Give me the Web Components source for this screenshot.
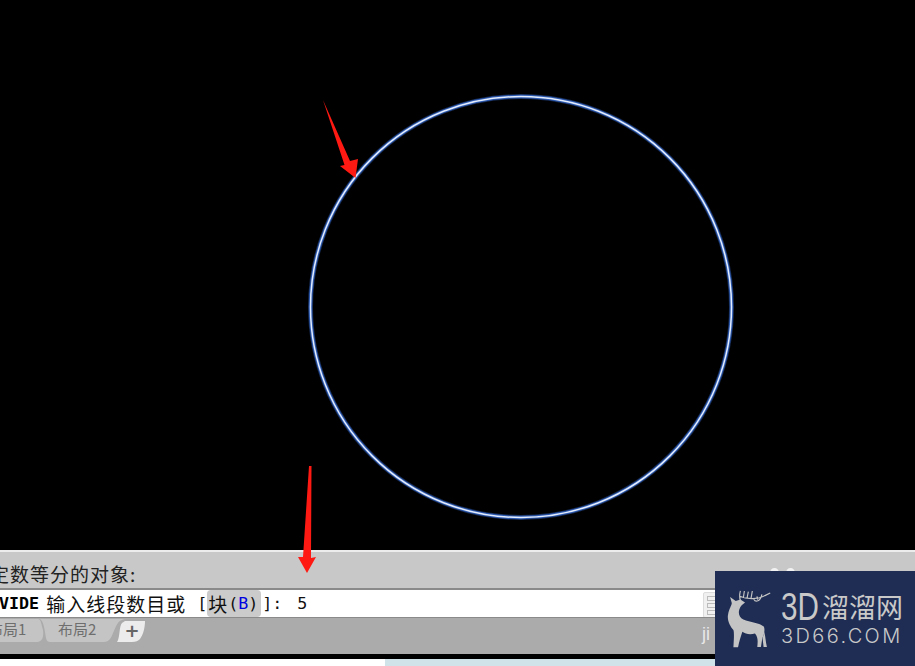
<!DOCTYPE html>
<html>
<head>
<meta charset="utf-8">
<style>
	html, body { margin: 0; height: 100%; background: #000; overflow: hidden; }
	body { display: flex; flex-direction: column; width: 915px; height: 666px; position: relative; }
</style>
</head>
<body>
<cad-viewport></cad-viewport>
<cad-history>定数等分的对象:</cad-history>
<cad-prompt></cad-prompt>
<cad-tabs></cad-tabs>
<page-strip></page-strip>
<red-arrows></red-arrows>
<logo-badge></logo-badge>

<script>
class CadViewport extends HTMLElement {
	constructor() {
		super();
		const shadowRoot = this.attachShadow({ mode: 'open' });
		shadowRoot.innerHTML = `<style>
	:host { display: block; flex: none; height: 550px; background: #000; overflow: hidden; }
	svg { display: block; }
	</style>
	<svg width="915" height="550" viewBox="0 0 915 550">
		<circle cx="521" cy="307" r="210.5" fill="none" stroke="#15294f" stroke-width="5"/>
		<circle cx="521" cy="307" r="210.5" fill="none" stroke="#2f5cb4" stroke-width="3.4"/>
		<circle cx="521" cy="307" r="210.5" fill="none" stroke="#e2ecfd" stroke-width="1.5"/>
	</svg>`;
	}
}

class RedArrows extends HTMLElement {
	constructor() {
		super();
		const shadowRoot = this.attachShadow({ mode: 'open' });
		shadowRoot.innerHTML = `<style>
	:host { position: absolute; left: 0; top: 0; width: 915px; height: 666px; pointer-events: none; }
	svg { display: block; }
	</style>
	<svg width="915" height="666" viewBox="0 0 915 666">
		<path d="M323 100 L350 161 L358 159 L355.5 178 L340 166 L344.500 165 Z" fill="#fe1a12"/>
		<path d="M309 466 L311.500 466 L311 558 L316 557 L307 573 L298 557 L303 557 Z" fill="#fe1a12"/>
	</svg>`;
	}
}

class CadHistory extends HTMLElement {
	constructor() {
		super();
		const shadowRoot = this.attachShadow({ mode: 'open' });
		shadowRoot.innerHTML = `<style>
	:host {
		display: block; flex: none; height: 38px; box-sizing: border-box; position: relative;
		background: #c8c8c8; border-top: 2px solid #ececec;
		font: 19px/43px "Noto Sans CJK SC", "DejaVu Sans Mono", monospace; letter-spacing: 1px; color: #222;
		overflow: hidden; white-space: nowrap;
	}
	.line { display: block; margin-left: -10px; }
	i { position: absolute; top: 16px; width: 9px; height: 10px; border-radius: 50%; background: #f2f2f2; }
	</style>
	<span class="line"><slot></slot></span>
	<i style="left:770px"></i><i style="left:786px"></i>`;
	}
}

class CadPrompt extends HTMLElement {
	constructor() {
		super();
		const shadowRoot = this.attachShadow({ mode: 'open' });
		shadowRoot.innerHTML = `<style>
	:host {
		display: flex; flex: none; align-items: center; height: 29px; box-sizing: border-box;
		background: #fff; border-top: 2px solid #8a8a8a;
		font: 16.67px "DejaVu Sans Mono", "Noto Sans CJK SC", monospace; color: #111;
		white-space: nowrap; overflow: hidden; position: relative;
	}
	b { margin-left: -1px; color: #000; }
	.cn { font: 19px "Noto Sans CJK SC", sans-serif; letter-spacing: 1px; }
	.cmd { margin-left: 7px; }
	.br { margin-left: 11px; }
	.opt {
		display: flex; align-items: center; height: 27px; padding: 0 3px 0 1px; margin-right: 1px;
		background: #cbcbcb; border-radius: 4px;
	}
	.key { color: #0000e0; }
	.val { margin-left: 15px; }
	.tool {
		position: absolute; left: 703px; top: 2px; width: 30px; height: 26px; box-sizing: border-box;
		background: #f0f0f0; border: 1px solid #dcdcdc; border-radius: 2px;
	}
	.tool i { position: absolute; left: 3px; width: 12px; height: 3px; border: 1px solid #bbb; }
	</style>
	<b>VIDE</b><span class="cn cmd">输入线段数目或</span><span class="br">[</span><span class="opt"><span class="cn">块</span><span>(</span><span class="key">B</span><span>)</span></span><span>]:</span><span class="val">5</span>
	<div class="tool"><i style="top:3px"></i><i style="top:10px"></i><i style="top:17px"></i></div>`;
	}
}

class CadTabs extends HTMLElement {
	constructor() {
		super();
		const shadowRoot = this.attachShadow({ mode: 'open' });
		shadowRoot.innerHTML = `<style>
	:host {
		display: flex; flex: none; height: 37px; background: #ababab; position: relative;
		border-top: 1px solid #8a8a8a; box-sizing: border-box;
		font: 15px "Noto Sans CJK SC", "Liberation Sans", sans-serif; color: #6e6e6e; overflow: hidden;
	}
	svg { position: absolute; left: 0; top: 0; }
	.tab { position: relative; height: 22px; line-height: 22px; }
	.one { margin-left: -12px; width: 70px; }
	.two { width: 59px; }
	.plus { position: relative; width: 30px; margin-top: 2px; text-align: center; font: bold 18px/22px "DejaVu Sans", sans-serif; color: #666; }
	.ji { position: absolute; left: 702px; top: 6px; font: 18px "Liberation Sans", sans-serif; color: #e8e8e8; }
	</style>
	<svg width="160" height="24" viewBox="0 0 160 24">
		<path d="M0 1 H38 C41 1 41 5 43 12 C44 19 42 24 37 24 H0 Z" fill="#c4c4c4"/>
		<path d="M40 1 H125 C117 2 116 9 113 15 C111 21 108 24 104 24 H50 C46 24 46 20 45 14 C44 8 43 3 40 1 Z" fill="#c4c4c4"/>
		<path d="M125 3 H145 C145 10 143 17 140 21 C138 23 136 24 132 24 H117 C120 20 119 8 122 5 Z" fill="#ececec"/>
	</svg>
	<div class="tab one">布局1</div>
	<div class="tab two">布局2</div>
	<div class="plus">+</div>
	<div class="ji">ji</div>`;
	}
}

class PageStrip extends HTMLElement {
	constructor() {
		super();
		const shadowRoot = this.attachShadow({ mode: 'open' });
		shadowRoot.innerHTML = `<style>
	:host { display: flex; flex: 1; padding-top: 5px; background: #000; }
	.a { width: 385px; background: #fff; }
	.b { flex: 1; background: #cfe3e8; }
	</style>
	<div class="a"></div><div class="b"></div>`;
	}
}

class LogoBadge extends HTMLElement {
	constructor() {
		super();
		const shadowRoot = this.attachShadow({ mode: 'open' });
		shadowRoot.innerHTML = `<style>
	:host {
		position: absolute; left: 715px; top: 571px; width: 200px; height: 95px;
		background: #1f2d54; color: #c9c9c9;
		display: flex; align-items: flex-start; box-sizing: border-box; padding: 16px 0 0 10px; gap: 8px;
	}
	svg { display: block; flex: none; }
	.txt { display: flex; flex-direction: column; margin-top: 4px; }
	.big { display: flex; align-items: center; height: 32px; font: 27px/32px "Noto Sans CJK SC", sans-serif; white-space: nowrap; }
	.d3 { display: inline-block; width: 41px; font: 38px/32px "Liberation Sans", sans-serif; transform: scaleX(.78); transform-origin: 0 50%; }
	.small { font: 300 20px/20px Inter, sans-serif; letter-spacing: 2.4px; white-space: nowrap; margin-top: 3px; }
	</style>
	<svg width="48" height="63" viewBox="30 50 144 190">
		<path d="M45 80 L62 92 L76 88 L90 97 L80 105 L76 110 C68 125 70 140 85 148 C105 156 135 158 147 170 C151 180 147 195 142 205 L138 231 L127 231 C129 212 129 200 120 190 C105 195 92 192 82 185 C77 200 72 215 69 232 L55 232 C56 210 58 190 55 180 C45 168 35 150 39 132 C42 115 50 105 50 98 Z" fill="#c4c4c4"/>
		<path d="M148 186 C152 200 152 215 156 231 L146 231 L143 205 Z" fill="#c4c4c4"/>
		<path d="M76 90 C72 80 74 70 76 62 M74 78 C95 88 130 88 150 76 L166 68 M85 82 L88 62 M96 84 L100 64 M108 85 L112 62 M116 86 C122 98 136 94 141 72 M128 88 L126 78" fill="none" stroke="#c4c4c4" stroke-width="3.5"/>
	</svg>
	<div class="txt"><span class="big"><span class="d3">3D</span><span>溜溜网</span></span><span class="small">3D66.COM</span></div>`;
	}
}

customElements.define('cad-viewport', CadViewport);
customElements.define('red-arrows', RedArrows);
customElements.define('cad-history', CadHistory);
customElements.define('cad-prompt', CadPrompt);
customElements.define('cad-tabs', CadTabs);
customElements.define('page-strip', PageStrip);
customElements.define('logo-badge', LogoBadge);
</script>
</body>
</html>
